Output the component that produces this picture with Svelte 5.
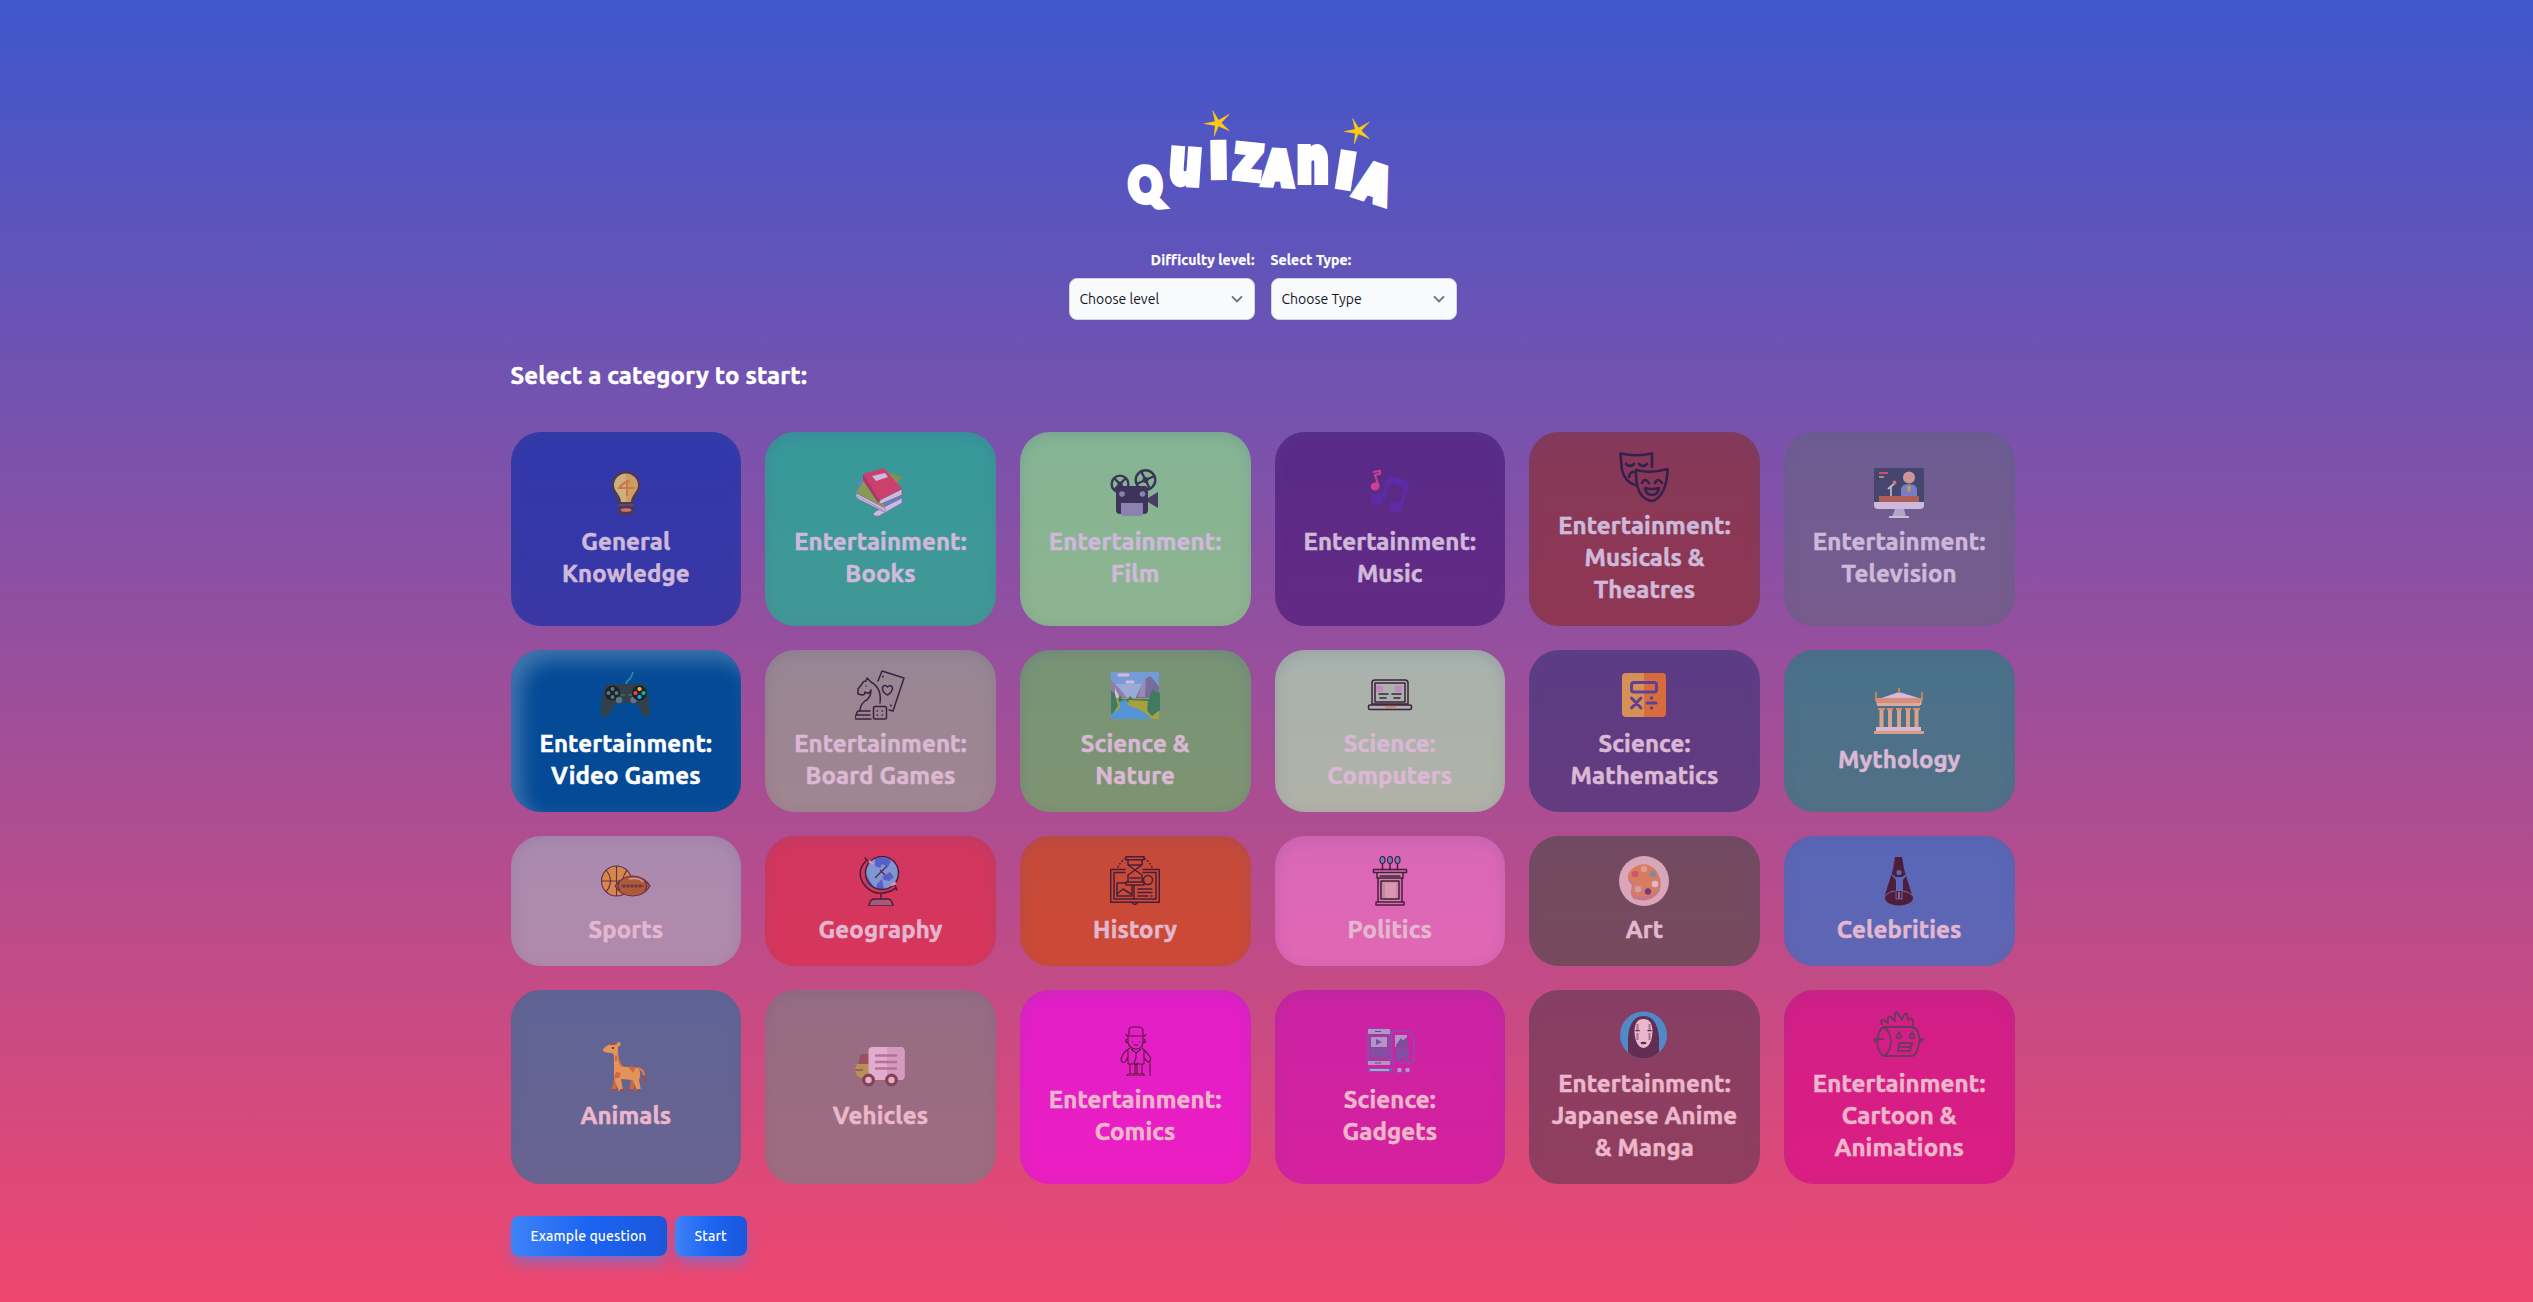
<script>
  const ink = 'fill="none" stroke="#000" stroke-width="1.5" stroke-linejoin="round" stroke-linecap="round"';

  const icons = {
    bulb: `<path d="M17 36C17 29 10.500 26 10.500 17a14.200 14.200 0 0 1 28.400 0C39 26 33 29 33 36v8q0 3-3 3h-10q-3 0-3-3z" fill="#2a2a1c"/><path d="M20 34C20 27 13 24 13 17a12 12 0 0 1 12-11.500V34z" fill="#fff060"/><path d="M30 34C30 27 37 24 37 17A12 12 0 0 0 25 5.500V34z" fill="#ffcf38"/><path d="M26 28V14q-5 1-8 6h16M19 19l7-6 3 1" fill="none" stroke="#ff9210" stroke-width="2"/><path d="M17.500 37h15" stroke="#6b5a80" stroke-width="1"/><ellipse cx="25" cy="42" rx="5.500" ry="1.800" fill="#ff9238"/>`,
    books: `<path d="M30 3l17 6-8 12z" fill="#89b820"/><path d="M2 15l10-7-6 14z" fill="#4f9fd8"/><path d="M22 38l25-12v10L24 47z" fill="#3ea6e0"/><path d="M21 43l26-13v5L24 48q-5 1-6-2z" fill="#fff" stroke="#63708a" stroke-width=".6"/><path d="M1 24L10 11 30 38l-2 5z" fill="#89cd20"/><path d="M1 25l27 14q4 2 1 5L3 31q-3-2-2-6z" fill="#fff" stroke="#63708a" stroke-width=".6"/><path d="M2 28l26 14" stroke="#777" stroke-width=".5"/><path d="M8 6L29 0 47 21 25 32z" fill="#ff3546"/><path d="M25 32L47 21v6L26 36q-3-1-1-4z" fill="#fff" stroke="#98344e" stroke-width=".6"/><path d="M8 6v6l15 23 2-3z" fill="#d0243c"/><path d="M17 8l13-3 3 4-12 4z" fill="#fff"/>`,
    film: `<g fill="none" stroke="#102028" stroke-width="2.400"><circle cx="10" cy="16" r="8.400"/><path d="M4 10l12 12M16 10L4 22"/><circle cx="35.500" cy="12" r="9.800"/><path d="M31 3l9 18M44.500 8L26.500 16"/></g><circle cx="10" cy="16" r="2.500" fill="#102028"/><circle cx="35.500" cy="12" r="3" fill="#102028"/><path d="M6 22q0-4 4-4h25q3 0 3 4v20q0 4-4 4H10q-4 0-4-4z" fill="#102028"/><path d="M38 30l10-6v16l-10-6z" fill="#223038"/><circle cx="12" cy="26" r="2.800" fill="#91a3b6"/><circle cx="32.500" cy="26" r="2.800" fill="#91a3b6"/><path d="M11 35h22v11q0 2-2 2H13q-2 0-2-2z" fill="#91a3b6"/>`,
    music: `<path d="M8 4l7-1v3l-5 1 4 12" fill="none" stroke="#ff357c" stroke-width="2"/><ellipse cx="10" cy="18.500" rx="4.300" ry="4" fill="#ff357c"/><g fill="#4414a0"><ellipse cx="12" cy="32" rx="6.500" ry="6"/><ellipse cx="31" cy="39.500" rx="6.500" ry="6"/><path d="M17 32l4-22q2-3 5-2l15 4q4 1 3 5l-7 23h-3l5-20-14-5-5 17z"/></g>`,
    masks: `<g fill="none" stroke="#000010" stroke-width="2.600" stroke-linecap="round" stroke-linejoin="round"><path d="M16 33Q6 30 3 18 2 10 1.500 1.500 17 5 33 1.500V15M17 18Q32 22 48.500 17q0 12-4 21-5 10-12 11Q22 47 18.500 35q-2-8-1.500-17z"/><path d="M7 12q4 4 8 0M20 12q4 4 8 0M23 31q3-6 7 0M36 31q3-6 7 0M10 25q1-6 6-5"/><path d="M26 36q7 2 14 0-1 7-7 7t-7-7z"/></g>`,
    tv: `<rect width="50" height="36" rx="2" fill="#203f49"/><path d="M5 5h9" stroke="#ff5241" stroke-width="2"/><path d="M5 9h5" stroke="#ffd065" stroke-width="1.500"/><path d="M27 28v-6q0-6 8-6t8 6v6z" fill="#709bdf"/><circle cx="35" cy="9.500" r="6" fill="#ffc58c"/><path d="M33 18h4l-1 6h-2z" fill="#ffcb10"/><path d="M17 28V19M14 21l7-6" stroke="#e1fbea" stroke-width="1.700"/><circle cx="20.500" cy="14.500" r="2" fill="#ff8765"/><path d="M5 28h40v6H5z" fill="#cb6920"/><path d="M0 34h50v3q0 4-4 4H4q-4 0-4-4z" fill="#fff"/><path d="M21 41h9l2 8H18z" fill="#d0e0dc"/><path d="M15 49h20" stroke="#fff" stroke-width="2"/>`,
    gamepad: `<path d="M25 14q1-4 4-5 2-3 3-7" fill="none" stroke="#3d899e" stroke-width="1.500"/><path d="M6 14h37q5 8 6 31-3 4-7 0l-6-11q-11-3-22 0L8 45q-4 4-8 0Q0 22 6 14z" fill="#32404a"/><circle cx="11.500" cy="23" r="7.500" fill="#17232d"/><g fill="#61737f"><circle cx="11.500" cy="19" r="2"/><circle cx="7.500" cy="23" r="2"/><circle cx="15.500" cy="23" r="2"/><circle cx="11.500" cy="27" r="2"/><circle cx="18" cy="30" r="3.200"/><circle cx="32.500" cy="30" r="3.200"/></g><circle cx="38.500" cy="23" r="7.500" fill="#17232d"/><circle cx="38.500" cy="19" r="2.100" fill="#ffb52e"/><circle cx="34.500" cy="23" r="2.100" fill="#ff4140"/><circle cx="42.500" cy="23" r="2.100" fill="#15b886"/><circle cx="38.500" cy="27" r="2.100" fill="#18a8ef"/><path d="M20 25h4M27 25h4" stroke="#61737f"/>`,
    board: `<g ${ink}><path d="M23 11l4-10 22 7-11 33-4-1M25 33q2-15-9-21l-4-4-1 3Q8 11 7 14l-4 5v5l4 1q3 0 3-3 4 3 6-2 0 8-6 11-5 4-5 10"/><path d="M32.500 25q-6-3-5-8 2-3 5 0 4-3 5 1 0 4-5 7z"/><path d="M15 41H3q-3 4 0 4M15 45H1q-2 3 0 4h15M28 6v1M36 35v1M11 16v0"/><rect x="18.500" y="36.500" width="13" height="12.500" rx="1.500"/><path d="M22 41h.5M27 41h.5M22 45h.5M27 45h.5"/></g>`,
    nature: `<path d="M1 2h48v47H1z" fill="#5dcfff"/><path d="M1 14h48v14H1z" fill="#98e8ff"/><path d="M9 5h9M17 12h6" stroke="#fff" stroke-width="3" stroke-linecap="round"/><path d="M1 10l8 8 9 11H1z" fill="#86a0b4"/><path d="M5 18l5 10H5z" fill="#fff"/><path d="M25 29L35 9l5-3 9 10v14z" fill="#5f83a0"/><path d="M32 14l4-7-1 20h-7z" fill="#95b2c4"/><path d="M1 28h48v21H1z" fill="#b0d700"/><path d="M1 20l4 4 3 12-7 10zM8 29l2-4 2 4h6l2-3 3 3h16l2-7 2-3 3 3 4 1v17l-8 6-4-4-3-10H9z" fill="#009a3c"/><path d="M18 30l20 1-1 10-14-4z" fill="#b0d700"/><path d="M12 31q5-3 5 1 0 4 9 6 11 5 16 11H1v-5q12-6 8-10 0-2 3-3z" fill="#23c4ff"/>`,
    laptop: `<path d="M11 19h7M30 19h7" stroke="#dfb0d8" stroke-width="6"/><g ${ink}><path d="M7 34V13q0-3 3-3h30q3 0 3 3v21z"/><path d="M10 32V13h30v19zM14 24h9M27 24h9M15 28h6M29 28h6"/><rect x="3.500" y="35" width="43" height="4.500" rx="1.500"/></g><path d="M20 37h11" stroke="#ff9c2b" stroke-width="1.500"/>`,
    math: `<path d="M25 3v44H7q-4 0-4-4V7q0-4 4-4z" fill="#fcbe2a"/><path d="M25 3h18q4 0 4 4v36q0 4-4 4H25z" fill="#ff8000"/><rect x="12.500" y="12.500" width="25" height="9.500" rx="2.500" fill="none" stroke="#34398e" stroke-width="3"/><path d="M12.500 28l9.500 10M22 28L12.500 38M28 33h9" stroke="#34398e" stroke-width="3" stroke-linecap="round"/><circle cx="32.500" cy="28" r="1.700" fill="#34398e"/><circle cx="32.500" cy="38" r="1.700" fill="#34398e"/>`,
    temple: `<path d="M25 6l23 7-1 6H3L2 14z" fill="#fff"/><path d="M2 6v9M48 6v9M25 2v6" stroke="#e9b032" stroke-width="1.800"/><path d="M2 12h46l-2 5H3z" fill="#ffb868"/><path d="M8 12l17-5 17 5z" fill="#fff"/><path d="M3 17h43v3H3z" fill="#ffe9a8"/><g stroke="#ffdc80" stroke-width="4"><path d="M7.500 23v18M16 23v18M25 23v18M34 23v18M42.500 23v18"/></g><path d="M4 23h7M13 23h6M22 23h6M31 23h6M39 23h7" stroke="#ffb850" stroke-width="2"/><path d="M2 41h45v4H2z" fill="#fff"/><path d="M0 45h50v3H0z" fill="#ffd078"/>`,
    sports: `<g stroke="#301824" stroke-width="1.100"><circle cx="15.500" cy="25" r="15" fill="#edaf20"/><path d="M0 25h31M15.500 10v30M5 14q9 11 0 22M26 14q-8 11 0 22" fill="none"/><path d="M14 30q7-10 18-10 12 1 17 10-6 10-17 10-12 0-18-10z" fill="#aa6400"/><path d="M20 30h23M23 28v4M27 28v4M31 28v4M35 28v4M39 28v4M19 25q-4 5 0 9M44 25q3 5 0 10" fill="none"/></g><path d="M28 23q10-2 14 3" fill="none" stroke="#e2c49c" stroke-width="1.500"/>`,
    globe: `<circle cx="27" cy="17" r="16.500" fill="#5ec8ff"/><path d="M20 3q9-4 16 2l-3 6-6-3-2 4-5-2zM27 21l8-5 4 5-5 4-5-1zM10 17l10 16-8-5zM22 28l5-5 2 10h-8z" fill="#1c6cf0"/><path d="M20 22l12-12M25 14l5 5" stroke="#101030" stroke-width="1.300"/><path d="M19 43h14q4 0 5 7H14q1-7 5-7z" fill="#a06070"/><g ${ink}><circle cx="27" cy="17" r="16.500"/><path d="M11 5Q1 15 8 27q10 15 28 8l5-3M10 2l4 4M40 29l2 5M26 38v5M19 43h14q4 0 5 7H14q1-7 5-7z"/></g><path d="M14 5l4 3M36 29l5-2" stroke="#ffc0c8" stroke-width="2.500"/>`,
    history: `<g ${ink}><path d="M15 13.500H.7v32.800h48.600V13.500H33M15 16.500H4V43h20V29M33 16.500h13V43H24M16 .7h18v3H16zM18 4v5l7 5 7-5V4M18 9h14M25 14l-7 5v7h14v-7zM16 26h18v3H16zM20 22h10M16 27H7v13h15V29M7 38l6-5 8 5M28 33h14M28 36.500h14M28 40h10M41 40h1M22 46q2 5 6 0"/><circle cx="38" cy="24" r="4.500"/><path d="M8 11q3-6 8-9M42 11q-3-6-8-9" stroke-dasharray=".5 3"/></g>`,
    politics: `<path d="M12 17h26v5H12zM15 23h20v24H15z" fill="#d0b0bc"/><path d="M20 27h11v15H20z" fill="#f4c8cc"/><g fill="#45a0e5" stroke="#000" stroke-width="1.200"><ellipse cx="17.500" cy="4" rx="2.500" ry="3.500"/><ellipse cx="25" cy="4" rx="2.500" ry="3.500"/><ellipse cx="32.500" cy="4" rx="2.500" ry="3.500"/></g><g ${ink}><path d="M17.500 8v6M25 8v6M32.500 8v6M8.500 13.500h33v3h-33zM12 17v5h26v-5M15 20h20M13 23v23M37 23v23M16 25h18v18H16zM11 49v-3h28v3z"/></g>`,
    art: `<circle cx="25" cy="25" r="25" fill="#f2e1d7"/><path d="M13 16Q24 5 35 13q10 10 5 23-9 12-25 7-5-4-2-13-1-3-3-4-2-3 3-10z" fill="#cf9880"/><path d="M12 14Q24 3 36 13q9 12 2 22-10 9-24 4-2-3 0-11 0-3-4-4-3-4 2-10z" fill="#ee9c48"/><g><circle cx="16" cy="18" r="3.200" fill="#e65c50"/><circle cx="25" cy="13" r="3.200" fill="#ffd083"/><circle cx="34" cy="18" r="3.200" fill="#5eb7a0"/><circle cx="36" cy="28" r="3.200" fill="#fff"/><circle cx="29" cy="35.500" r="3.200" fill="#46307a"/><circle cx="19" cy="33" r="3.200" fill="#dfd5c4"/></g>`,
    stage: `<path d="M21 1h7l2 12 8 26H11l8-26z" fill="#080004"/><ellipse cx="25" cy="42" rx="14" ry="7.500" fill="#080004"/><g fill="#2078d2"><circle cx="25" cy="16.500" r="2.600"/><path d="M15 16l7 5h6l7-5-6 8v11h-7V24z"/></g><path d="M22 35v8h2.500v-7h1v7H28v-8M12 39q4-4 9-4M29 35q6 1 9 4" fill="none" stroke="#6d9bdd" stroke-width=".8"/>`,
    giraffe: `<path d="M15 37l-1 7-2 4M32 37l-1 8-1 3" fill="none" stroke="#cf7f18" stroke-width="4"/><path d="M2 7q5-5 12-6l5-1q2 3-2 5 0 18 6 20 10-1 14 1 4 4 1 12l2 11h-4l-4-11-12-1 2 12h-4l-5-13V13l-2-2Q1 11 2 7z" fill="#f4c440"/><path d="M16 7q2 16 8 18h-3q-5-4-5-18zM14 14h2v5h-2zM15 30l5 1-2 5-5 0zM27 25h8l-3 6z" fill="#d47f0f"/><path d="M37 26q7 2 6 10" fill="none" stroke="#e2a030" stroke-width="2"/><path d="M41 34l4-1v6l-3 0zM8 3q5-4 9-1l-5 1zM10 47h5v2h-5zM19 47h4v2h-4zM28 47h4v2h-4zM36 47h4v2h-4z" fill="#885020"/><circle cx="12" cy="6" r="1.100" fill="#101010"/>`,
    truck: `<path d="M6 12h9v14H3q0-8 3-14z" fill="#785549"/><path d="M2 22h13v14H6q-5-1-6-9z" fill="#aac139"/><path d="M0 28h8" stroke="#886850" stroke-width="2"/><rect x="13.500" y="5" width="36" height="33" rx="4" fill="#f0eeff"/><path d="M32 5h13.500q4 0 4 4v25q0 4-4 4H32z" fill="#d9d2ea"/><path d="M21 13.500h20M21 20h20M21 26.500h20" stroke="#a58caa" stroke-width="2.500" stroke-linecap="round"/><g fill="#ffeef0" stroke="#4e3c41" stroke-width="3.200"><circle cx="13.500" cy="38" r="4.800"/><circle cx="36.500" cy="38" r="4.800"/></g>`,
    comics: `<g fill="none" stroke="#000" stroke-width="1.100" stroke-linejoin="round"><path d="M19 9V4q0-3 4-3h5q5 0 5 4v4M16 8q0 2 3 2h14q3 0 3-2M18 10v7q2 6 8 6t7-6v-7M17 13q-3 3 1 4M34 13q3 3-1 4M22 16h1M29 16h1M24 19h4M20 22q-7 4-9 11 0 4 4 3l3-5M32 22q5 4 8 9 2 4-2 5l-4-4M18 24v14h16V24M21 23l5 4 5-4M26 27v5l-2 5 2 2 2-2M20 38v10M25 39v9M27 39v9M32 38v10M17 50q0-2 3-2h14v2zM40 36v14"/></g>`,
    gadgets: `<path d="M3 8h22v27H3z" fill="#8a30b6"/><g fill="none" stroke="#356ad0" stroke-width="1.200"><rect x="3" y="3" width="22" height="35" rx="2"/><path d="M27 38V5h16q5 2 6 8v21l-4 4"/><path d="M27 38l5-5 5 5 5-4 3 4M30 46h17"/></g><path d="M3 3h22v5H3zM6 11h16v10H6zM3 35h22v4H3zM30 9h12v2L31 21h-1z" fill="#a0c8f4"/><path d="M6 22h16v9H6zM31 22h13v11H31z" fill="#4f54b6"/><path d="M11 13l6 3-6 3zM31 19l5-7 3 4 4-5v10H31z" fill="#4054b0"/><path d="M3 44h24" stroke="#356ad0" stroke-width="4"/><path d="M5 44h19" stroke="#b0d8ff" stroke-width="2"/><circle cx="34.500" cy="44" r="2.300" fill="#b0c8ff"/><circle cx="42.500" cy="44" r="2.300" fill="#b0c8ff"/><path d="M10 5.500h6M10 37h6" stroke="#30408a"/>`,
    anime: `<circle cx="24.500" cy="25" r="23.500" fill="#00b4f8"/><path d="M9 42V27Q11 6 24.500 6T40 27v15q-6 6.500-15.500 6.500T9 42z" fill="#1c1b34"/><path d="M24.500 9q9 0 9 13-1 15-9 16-8-1-9-16 0-13 9-13z" fill="#fff"/><path d="M16.500 20.500h4M28.500 20.500h4" stroke="#101020" stroke-width="1.700"/><path d="M17.500 14h2v5h-2zM29.500 14h2v5h-2zM17.500 23h2v7h-2zM29.500 23h2v7h-2z" fill="#909098"/><ellipse cx="24.500" cy="33" rx="3" ry="1.300" fill="#181828"/>`,
    cartoon: `<g fill="none" stroke="#2c3046" stroke-width="1.900" stroke-linejoin="round"><path d="M10 17h28q4 1 6 5 3 10 0 16-2 8-7 8H10q-4-2-6-8-2-8 1-15 2-5 5-6zM10 17q7 6 7 15t-7 14M4 29H1q-2 2 3 4M1 29h9M45 29h4q0 3-5 3"/><path d="M8 15q-2-6 1-5l5 3q-1-8 3-6l4 4q-1-9 2-9l5 8q2-8 5-6l1 6q5-3 5 1v5"/><path d="M25 22l2.500 5q-2.500 3-5 0zM38 22l2.500 5q-2.500 3-5 0zM25 33h13l-2 8H24zM24 37h13"/></g>`
  };

  const categories = [
    { lines: ['General', 'Knowledge'], color: '#0028aa', icon: 'bulb' },
    { lines: ['Entertainment:', 'Books'], color: '#0cc88f', icon: 'books' },
    { lines: ['Entertainment:', 'Film'], color: '#8cf785', icon: 'film' },
    { lines: ['Entertainment:', 'Music'], color: '#441171', icon: 'music' },
    { lines: ['Entertainment:', 'Musicals &', 'Theatres'], color: '#8e2821', icon: 'masks' },
    { lines: ['Entertainment:', 'Television'], color: '#666482', icon: 'tv' },
    { lines: ['Entertainment:', 'Video Games'], color: '#054a96', icon: 'gamepad' },
    { lines: ['Entertainment:', 'Board Games'], color: '#99ac8f', icon: 'board' },
    { lines: ['Science &', 'Nature'], color: '#61c35d', icon: 'nature' },
    { lines: ['Science:', 'Computers'], color: '#b4f5b7', icon: 'laptop' },
    { lines: ['Science:', 'Mathematics'], color: '#353075', icon: 'math' },
    { lines: ['Mythology'], color: '#168980', icon: 'temple' },
    { lines: ['Sports'], color: '#a7b4c5', icon: 'sports' },
    { lines: ['Geography'], color: '#e8283f', icon: 'globe' },
    { lines: ['History'], color: '#d44900', icon: 'history' },
    { lines: ['Politics'], color: '#f57ad2', icon: 'politics' },
    { lines: ['Art'], color: '#494943', icon: 'art' },
    { lines: ['Celebrities'], color: '#2078d2', icon: 'stage' },
    { lines: ['Animals'], color: '#1c76a2', icon: 'giraffe' },
    { lines: ['Vehicles'], color: '#768484', icon: 'truck' },
    { lines: ['Entertainment:', 'Comics'], color: '#f502f5', icon: 'comics' },
    { lines: ['Science:', 'Gadgets'], color: '#d008b9', icon: 'gadgets' },
    { lines: ['Entertainment:', 'Japanese Anime', '& Manga'], color: '#5f374e', icon: 'anime' },
    { lines: ['Entertainment:', 'Cartoon &', 'Animations'], color: '#da028a', icon: 'cartoon' }
  ];

  // Each letter sits on an arc: centre x, baseline y, tilt, horizontal stretch, size, outline
  const letters = [
    { ch: 'Q', x: 27, y: 96.5, r: -6, sx: 0.86, size: 47, w: 6, round: true },
    { ch: 'u', x: 64, y: 79, r: 4, sx: 0.74, size: 64, w: 6 },
    { ch: 'I', x: 99, y: 72, r: -1, sx: 1.05, size: 47, w: 6 },
    { ch: 'Z', x: 126.5, y: 74, r: 6, sx: 0.86, size: 47, w: 6 },
    { ch: 'A', x: 157.5, y: 80, r: 3, sx: 0.84, size: 47, w: 6 },
    { ch: 'n', x: 193, y: 77, r: 0, sx: 0.74, size: 64, w: 6 },
    { ch: 'I', x: 223, y: 82, r: 9, sx: 1.05, size: 47, w: 6 },
    { ch: 'A', x: 249, y: 95, r: 18, sx: 0.88, size: 49, w: 6 }
  ];

  let selected = $state(6);
</script>

<main>
  <svg class="logo" width="275" height="110" viewBox="0 0 275 110" role="img" aria-label="Quizania">
    {#each letters as l}
      <text
        class:round={l.round}
        transform="translate({l.x} {l.y}) rotate({l.r}) scale({l.sx} 1)"
        font-size={l.size}
        stroke-width={l.w}>{l.ch}</text>
    {/each}
    <path class="star" d="M92.700 5.700L98.600 15.200 109.300 9.300 101.200 17.800 109.300 25.700 98.400 21 94.300 31 95.200 20.500 84.300 18.700 95.200 16.500z" />
    <path class="star" d="M232.700 13.500L238.600 23 249.300 17.100 241.200 25.600 249.300 33.500 238.400 28.800 234.300 38.800 235.200 28.300 224.300 26.500 235.200 24.300z" />
  </svg>

  <div class="filters">
    <div class="field end">
      <span class="label">Difficulty level:</span>
      <button class="select">
        <span>Choose level</span>
        <svg width="12" height="8" viewBox="0 0 12 8"><path d="M1 1.300l5 5 5-5" /></svg>
      </button>
    </div>
    <div class="field">
      <span class="label">Select Type:</span>
      <button class="select">
        <span>Choose Type</span>
        <svg width="12" height="8" viewBox="0 0 12 8"><path d="M1 1.300l5 5 5-5" /></svg>
      </button>
    </div>
  </div>

  <h1>Select a category to start:</h1>

  <div class="grid">
    {#each categories as c, i}
      <button class="card" class:active={selected === i} style="background-color: {c.color}" onclick={() => (selected = i)}>
        <svg width="50" height="50" viewBox="0 0 50 50" aria-hidden="true">{@html icons[c.icon]}</svg>
        <span class="name">
          {#each c.lines as line}<span>{line}</span>{/each}
        </span>
      </button>
    {/each}
  </div>

  <div class="actions">
    <button class="cta">Example question</button>
    <button class="cta">Start</button>
  </div>
</main>

<style>
  :global(body) {
    background: linear-gradient(#3e57cc, #ef476f);
  }
  :global(*) {
    box-sizing: border-box;
  }
  main {
    width: 1504px;
    height: 1302px;
    margin-left: 510.5px;
    padding-top: 105px;
    display: flex;
    flex-direction: column;
    font-family: Ubuntu, 'Noto Sans', sans-serif;
    color: #fff;
  }
  button {
    border: 0;
    margin: 0;
    font-family: inherit;
    cursor: pointer;
  }
  .logo {
    display: block;
    margin-left: 609.5px;
    overflow: visible;
  }
  .logo text {
    font-family: Inter, sans-serif;
    font-weight: 900;
    text-anchor: middle;
    fill: #fff;
    stroke: #fff;
  }
  .logo .round {
    font-family: Lato, sans-serif;
  }
  .star {
    fill: #ffca12;
    stroke: #ffca12;
    stroke-width: 0.5;
  }
  .filters {
    display: flex;
    justify-content: center;
    gap: 16px;
    margin-top: 35px;
  }
  .field {
    width: 186px;
    display: flex;
    flex-direction: column;
    gap: 8px;
  }
  .end .label {
    text-align: right;
  }
  .label {
    font-size: 14px;
    line-height: 20px;
    font-weight: 700;
    letter-spacing: 0.12px;
    -webkit-text-stroke: 0.25px currentColor;
  }
  .select {
    height: 42px;
    padding: 0 11px 0 10px;
    display: flex;
    align-items: center;
    justify-content: space-between;
    border: 1px solid #d1d5db;
    border-radius: 8px;
    background: #f9fafb;
    color: #111827;
    font-size: 14px;
  }
  .select path {
    fill: none;
    stroke: #6b7280;
    stroke-width: 1.900;
  }
  h1 {
    margin: 40px 0 40px;
    font-size: 24px;
    line-height: 32px;
    font-weight: 700;
    letter-spacing: 0.19px;
    -webkit-text-stroke: 0.5px currentColor;
  }
  .grid {
    display: grid;
    grid-template-columns: repeat(6, 1fr);
    gap: 24px;
  }
  .card {
    padding: 20px 0;
    display: flex;
    flex-direction: column;
    align-items: center;
    justify-content: center;
    gap: 8px;
    border-radius: 30px;
    color: #fff;
    opacity: 0.6;
    box-shadow: inset 0 3px 14px rgba(50, 80, 120, 0.2);
  }
  .card.active {
    opacity: 1;
    box-shadow: inset 10px 10px 20px rgba(255, 255, 255, 0.24);
  }
  .name {
    display: flex;
    flex-direction: column;
    align-items: center;
    font-size: 24px;
    line-height: 32px;
    font-weight: 700;
    letter-spacing: 0.14px;
    -webkit-text-stroke: 0.5px currentColor;
  }
  .actions {
    display: flex;
    gap: 8px;
    margin-top: 32px;
  }
  .cta {
    height: 40px;
    padding: 0 20px;
    border-radius: 8px;
    background: linear-gradient(to right, #3f83f8, #1c64f2, #1a56db);
    box-shadow: 0 10px 15px -3px rgba(63, 131, 248, 0.5), 0 4px 6px -4px rgba(63, 131, 248, 0.5);
    color: #fff;
    font-size: 14px;
    font-weight: 500;
    letter-spacing: 0.1px;
  }
</style>
